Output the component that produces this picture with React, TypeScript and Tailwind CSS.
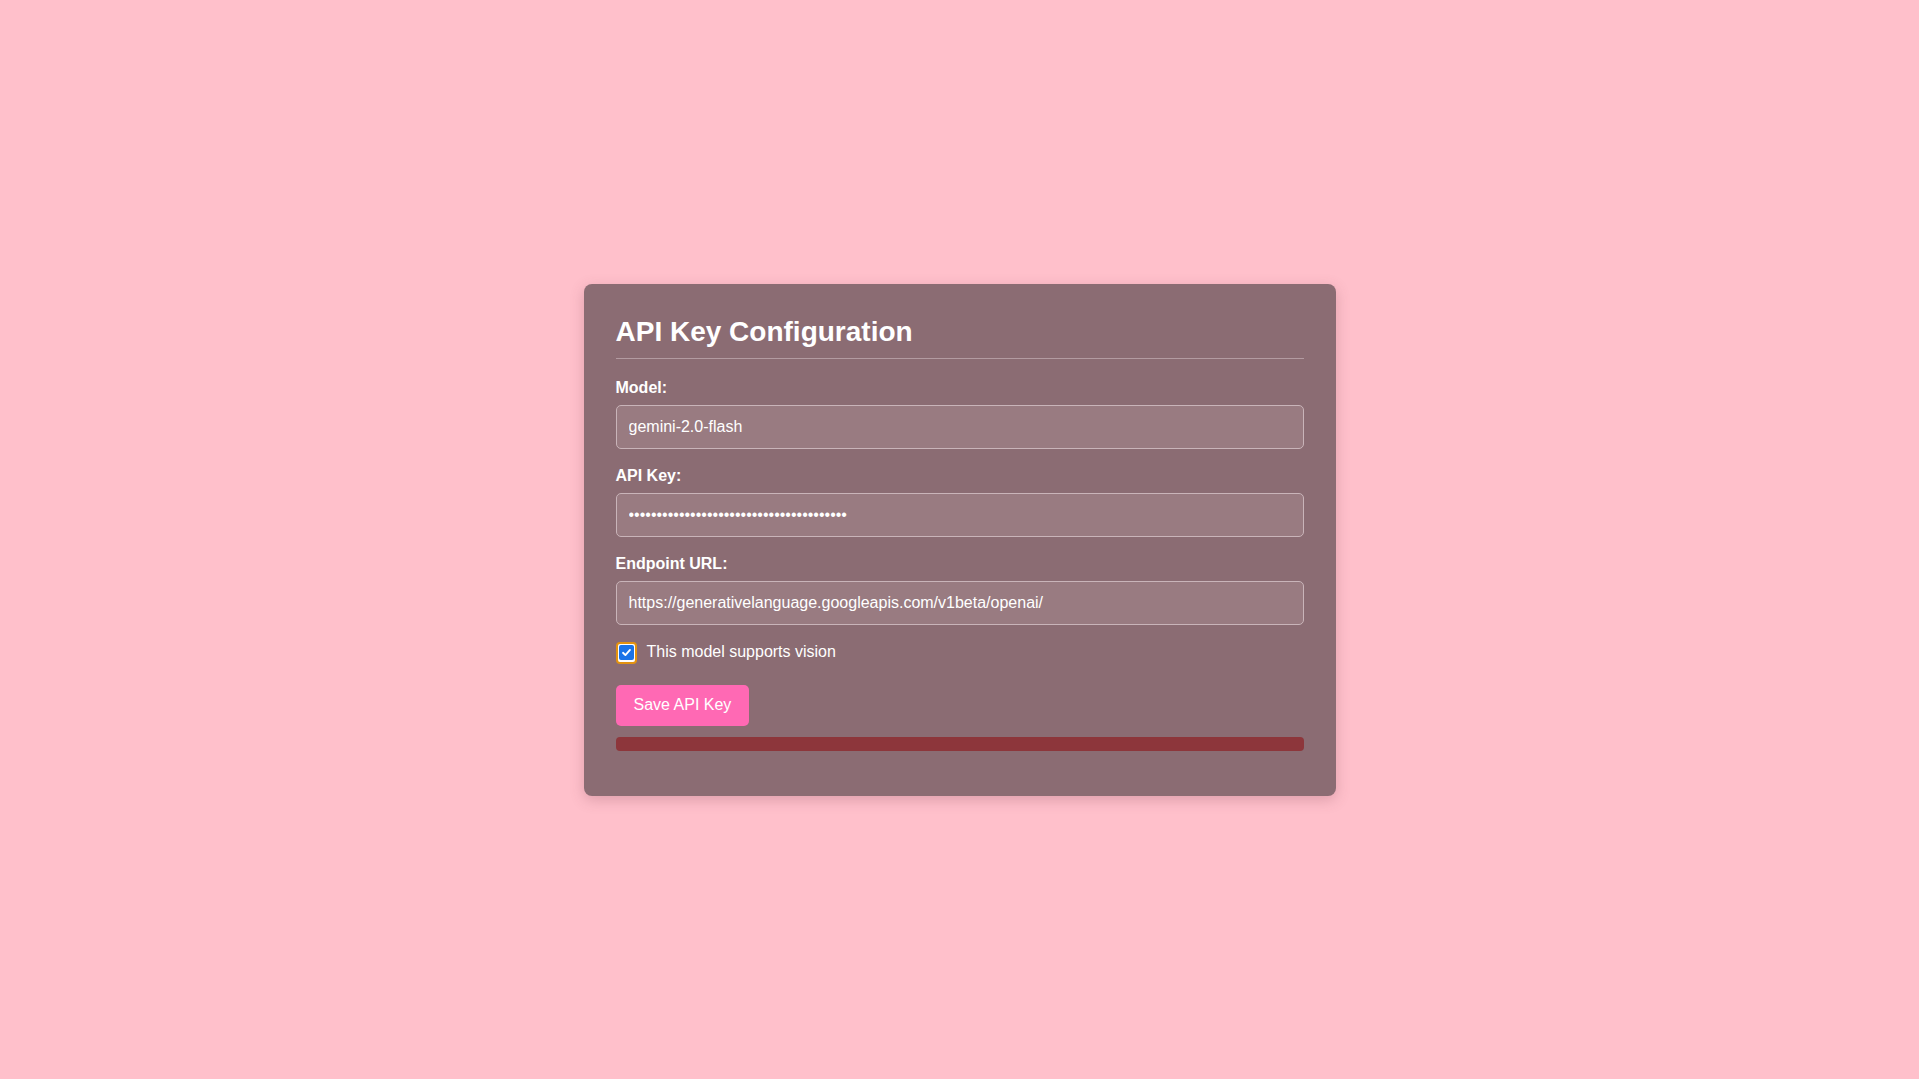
import React from "react";

const font = { fontFamily: '"Liberation Sans", Arial, sans-serif' };

const Field = ({ label, children }: { label: string; children: React.ReactNode }) => (
  <div className="mb-[17px]">
    <label className="block mb-[8px] text-[16px] leading-[19px] font-bold text-white">{label}</label>
    {children}
  </div>
);

const inputCls =
  "block w-full h-[44px] px-[12px] rounded-[5px] border border-[#c9b4b9] bg-[#997b81] text-[16px] text-white outline-none";

const App = () => {
  return (
    <div className="min-h-screen flex items-center justify-center bg-[#ffc0cb]" style={font}>
      <div className="w-[752px] p-[32px] rounded-[8px] bg-[#8b6c73] shadow-[0_4px_14px_rgba(120,60,75,0.25)]">
        <h2 className="pb-[10px] mb-[19px] border-b border-[#b39ba1] text-[28px] leading-[32px] font-bold text-white">
          API Key Configuration
        </h2>

        <Field label="Model:">
          <input className={inputCls} type="text" defaultValue="gemini-2.0-flash" readOnly />
        </Field>
        <Field label="API Key:">
          <input className={inputCls} type="password" defaultValue="abcdefghijklmnopqrstuvwxyz0123456789ABC" readOnly />
        </Field>
        <div>
          <label className="block mb-[8px] text-[16px] leading-[19px] font-bold text-white">Endpoint URL:</label>
          <input
            className={inputCls}
            type="text"
            defaultValue="https://generativelanguage.googleapis.com/v1beta/openai/"
            readOnly
          />
        </div>

        <div className="mt-[17px] flex items-start gap-[10px]">
          <span className="flex items-center justify-center w-[21px] h-[22px] rounded-[4px] border-2 border-[#e3920f] bg-white">
            <span className="flex items-center justify-center w-[15px] h-[15px] rounded-[2px] bg-[#1a73e8]">
              <svg width="11" height="11" viewBox="0 0 12 12" fill="none">
                <path d="M2.2 6.3 L4.8 8.8 L9.8 3.2" stroke="white" strokeWidth="2" strokeLinecap="round" strokeLinejoin="round" />
              </svg>
            </span>
          </span>
          <span className="text-[16px] leading-[19px] text-white">This model supports vision</span>
        </div>

        <button className="mt-[21px] h-[41px] px-[18px] rounded-[5px] bg-[#ff69b4] text-[16px] text-white">
          Save API Key
        </button>

        <div className="mt-[11px] mb-[13px] h-[14px] rounded-[4px] bg-[#8d363b]" />
      </div>
    </div>
  );
};

export default App;
